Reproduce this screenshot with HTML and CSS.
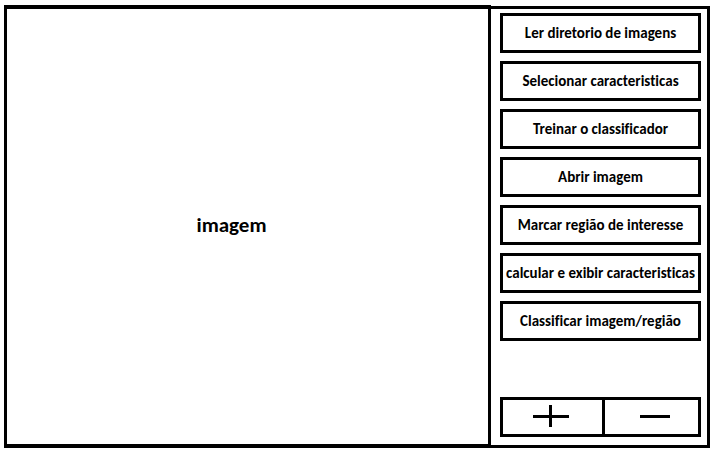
FILE: index.html
```
<!DOCTYPE html>
<html lang="pt">
<head>
<meta charset="utf-8">
<title>Classificador de imagens</title>
<link rel="stylesheet" href="styles.css">
</head>
<body>
<div class="app">
  <main class="viewer">imagem</main>
  <aside class="panel">
    <div class="actions">
      <button type="button" class="action">Ler diretorio de imagens</button>
      <button type="button" class="action">Selecionar caracteristicas</button>
      <button type="button" class="action">Treinar o classificador</button>
      <button type="button" class="action">Abrir imagem</button>
      <button type="button" class="action">Marcar região de interesse</button>
      <button type="button" class="action">calcular e exibir caracteristicas</button>
      <button type="button" class="action">Classificar imagem/região</button>
    </div>
    <div class="zoom">
      <button type="button" class="zoom-button" aria-label="Ampliar">
        <svg class="icon" viewBox="0 0 40 24" aria-hidden="true"><path d="M0 10h36v3H0zM16 0h3v22h-3z"/></svg>
      </button>
      <button type="button" class="zoom-button" aria-label="Reduzir">
        <svg class="icon" viewBox="0 0 40 24" aria-hidden="true"><path d="M8 10h30v3H8z"/></svg>
      </button>
    </div>
  </aside>
</div>
</body>
</html>
```
FILE: styles.css
```
* {
  box-sizing: border-box;
}

body {
  margin: 0;
  background: #fff;
  color: #000;
  font-family: Calibri, Carlito, Lato, sans-serif;
  font-weight: 700;
  font-variant-ligatures: none;
}

.app {
  display: flex;
  min-height: 100vh;
  padding: 5px 6px 6px 4px;
}

.viewer {
  flex: 1;
  display: flex;
  align-items: center;
  justify-content: center;
  padding: 0 32px 4px 0;
  border: 3px solid #000;
  border-width: 4px 3px;
  font-size: 21px;
  line-height: 24px;
}

.panel {
  flex: 0 0 219px;
  display: flex;
  flex-direction: column;
  justify-content: space-between;
  margin-top: 1px;
  padding: 4px 6px 8px 9px;
  border: 3px solid #000;
  border-left: 0;
}

.actions {
  display: flex;
  flex-direction: column;
  gap: 8px;
}

.action,
.zoom-button {
  height: 40px;
  margin: 0;
  padding: 0;
  border: 3px solid #000;
  border-radius: 0;
  background: #fff;
  color: inherit;
  font: inherit;
  font-variant-ligatures: none;
}

.action {
  font-size: 15px;
  line-height: 16px;
  white-space: nowrap;
}

.zoom {
  display: grid;
  grid-template-columns: 105fr 96fr;
}

.zoom-button {
  display: flex;
  align-items: center;
  justify-content: center;
}

.zoom-button + .zoom-button {
  border-left: 0;
}

.icon {
  width: 40px;
  height: 24px;
}
```
